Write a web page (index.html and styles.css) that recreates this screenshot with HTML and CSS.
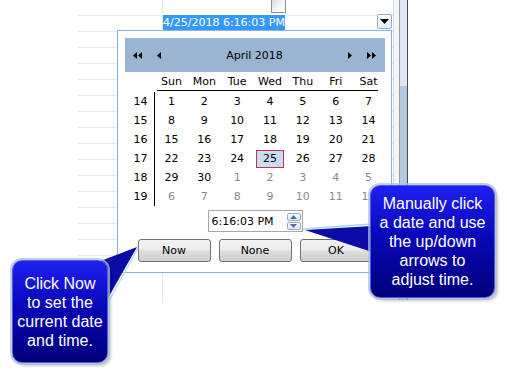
FILE: index.html
```html
<!DOCTYPE html>
<html>
<head>
<meta charset="utf-8">
<link rel="stylesheet" href="styles.css">
</head>
<body>
<div class="app">
  <div class="sheet">
    <div class="row"><div class="c1"></div><div class="c2 center"><span class="checkbox"></span></div></div>
    <div class="row"><div class="c1"></div><div class="c2 editing"><span class="seltext">4/25/2018 6:16:03 PM</span><span class="drop"><svg width="9" height="5" viewBox="0 0 9 5"><path d="M0 0H9L4.5 5Z" fill="#000"/></svg></span></div></div>
    <div class="row"><div class="c1"></div><div class="c2"></div></div>
    <div class="row"><div class="c1"></div><div class="c2"></div></div>
    <div class="row"><div class="c1"></div><div class="c2"></div></div>
    <div class="row"><div class="c1"></div><div class="c2"></div></div>
    <div class="row"><div class="c1"></div><div class="c2"></div></div>
    <div class="row"><div class="c1"></div><div class="c2"></div></div>
    <div class="row"><div class="c1"></div><div class="c2"></div></div>
    <div class="row"><div class="c1"></div><div class="c2"></div></div>
    <div class="row"><div class="c1"></div><div class="c2"></div></div>
    <div class="row"><div class="c1"></div><div class="c2"></div></div>
    <div class="row"><div class="c1"></div><div class="c2"></div></div>
    <div class="row"><div class="c1"></div><div class="c2"></div></div>
    <div class="row"><div class="c1"></div><div class="c2"></div></div>
    <div class="row"><div class="c1"></div><div class="c2"></div></div>
    <div class="row"><div class="c1"></div><div class="c2"></div></div>
    <div class="row tail-row"><div class="c1"></div><div class="c2"></div></div>
  </div>
  <div class="scrollbar">
    <div class="sb-gap"></div>
    <div class="sb-track"><div class="sb-thumb"></div></div>
  </div>
</div>

<div class="popup">
  <div class="cal-head">
    <svg class="nav" width="28" height="7" viewBox="0 0 28 7"><path d="M4 0V7L0 3.5Z M9 0V7L5 3.5Z M28 0V7L24 3.5Z" fill="#000"/></svg>
    <span class="title">April 2018</span>
    <svg class="nav" width="29" height="7" viewBox="0 0 29 7"><path d="M0 0V7L4 3.5Z M19 0V7L23 3.5Z M24 0V7L28 3.5Z" fill="#000"/></svg>
  </div>
  <div class="names">
    <span></span><span>Sun</span><span>Mon</span><span>Tue</span><span>Wed</span><span>Thu</span><span>Fri</span><span>Sat</span>
  </div>
  <div class="rule"></div>
  <div class="days">
    <span class="wk">14</span><span>1</span><span>2</span><span>3</span><span>4</span><span>5</span><span>6</span><span>7</span>
    <span class="wk">15</span><span>8</span><span>9</span><span>10</span><span>11</span><span>12</span><span>13</span><span>14</span>
    <span class="wk">16</span><span>15</span><span>16</span><span>17</span><span>18</span><span>19</span><span>20</span><span>21</span>
    <span class="wk">17</span><span>22</span><span>23</span><span>24</span><span><b class="today">25</b></span><span>26</span><span>27</span><span>28</span>
    <span class="wk">18</span><span>29</span><span>30</span><span class="other">1</span><span class="other">2</span><span class="other">3</span><span class="other">4</span><span class="other">5</span>
    <span class="wk">19</span><span class="other">6</span><span class="other">7</span><span class="other">8</span><span class="other">9</span><span class="other">10</span><span class="other">11</span><span class="other">12</span>
  </div>
  <div class="time-row">
    <div class="time">
      <span class="time-text">6:16:03 PM</span>
      <div class="spin">
        <span class="spin-btn"><svg width="7" height="4" viewBox="0 0 7 4"><path d="M0 4L3.5 0L7 4Z" fill="#4d6fa8"/></svg></span>
        <span class="spin-btn"><svg width="7" height="4" viewBox="0 0 7 4"><path d="M0 0L3.5 4L7 0Z" fill="#4d6fa8"/></svg></span>
      </div>
    </div>
  </div>
  <div class="buttons">
    <button class="btn">Now</button>
    <button class="btn">None</button>
    <button class="btn">OK</button>
  </div>
</div>

<svg class="tails" width="507" height="378" viewBox="0 0 507 378">
  <polygon points="98,262 137,247 108,298" fill="#0b0ba6"/>
  <line x1="110" y1="299" x2="138" y2="248" stroke="#b9dcef" stroke-width="1.5"/>
  <polygon points="305,230 372,226 372,252" fill="#0b0ba6"/>
  <line x1="303" y1="229" x2="372" y2="224" stroke="#a9d3ee" stroke-width="1.5"/>
</svg>

<div class="callout callout-left">Click Now<br>to set the<br>current date<br>and time.</div>
<div class="callout callout-right">Manually click<br>a date and use<br>the up/down<br>arrows to<br>adjust time.</div>
</body>
</html>
```
FILE: styles.css
```css
* { box-sizing: border-box; }
html, body { margin: 0; padding: 0; }
body {
  width: 507px;
  height: 378px;
  position: relative;
  overflow: hidden;
  background: #fff;
  font-family: "DejaVu Sans", sans-serif;
  font-size: 11px;
  color: #000;
}

/* background sheet */
.app { display: flex; align-items: flex-start; }
.sheet { margin-left: 77px; width: 316px; }
.row { display: flex; height: 16px; border-bottom: 1px solid #e9e9e9; }
.tail-row { height: 30px; border-bottom: 0; }
.c1 { width: 86px; border-right: 1px solid #e9e9e9; }
.c2 { flex: 1; display: flex; }
.center { justify-content: center; }
.checkbox {
  width: 15px; height: 14px; margin-top: -1px;
  border: 1px solid #8f8f8f;
  background: linear-gradient(135deg, #dcdcdc, #f7f7f7 60%, #ffffff);
}
.editing { align-items: flex-start; }
.seltext {
  margin-top: -1px;
  height: 15px; line-height: 15px;
  background: #3399ff; color: #fff;
  white-space: nowrap;
}
.drop {
  margin-left: auto; margin-right: 1px; margin-top: -2px;
  width: 15px; height: 15px;
  border: 1px solid #86aede; border-radius: 2px;
  background: linear-gradient(#ffffff, #e6eef8);
  display: flex; align-items: center; justify-content: center;
}

.scrollbar { display: flex; height: 300px; border-left: 1px solid #dadada; border-right: 1px solid #4a4a4a; }
.sb-gap { width: 6px; background: #f3f6fa; border-right: 1px solid #9c9c9c; }
.sb-track { width: 7px; background: #dce7f3; padding-top: 86px; }
.sb-thumb { height: 100%; background: #b3c9e2; }

/* popup calendar */
.popup {
  position: absolute; left: 117px; top: 30px;
  width: 275px; height: 243px;
  border: 1px solid #8db3dd;
  background: #fff;
  padding: 7px 6px 0 7px;
}
.cal-head {
  height: 34px; background: #9bb4d1;
  display: flex; align-items: center;
  padding: 0 8px;
}
.nav { display: block; }
.title { flex: 1; text-align: center; font-size: 11px; }
.names, .days {
  display: grid;
  grid-template-columns: 30px repeat(7, 1fr);
}
.names span { height: 18px; display: flex; align-items: center; justify-content: center; }
.rule { height: 1px; background: #000; margin: 0 7px 0 32px; }
.days { margin-top: 1px; grid-auto-rows: 19px; }
.days span { display: flex; align-items: center; justify-content: center; }
.days .wk { border-right: 1px solid #000; padding-left: 2px; }
.days .other { color: #8a8a8a; }
.today {
  font-weight: normal;
  width: 28px; height: 18px;
  border: 1px solid #c3343e;
  background: #c7ddf5;
  display: flex; align-items: center; justify-content: center;
}
.time-row { display: flex; justify-content: center; margin-top: 4px; }
.time {
  width: 95px; height: 22px;
  border: 1px solid #a8a8a8;
  display: flex; align-items: center;
  padding-left: 3px;
}
.time-text { flex: 1; }
.spin { display: flex; flex-direction: column; gap: 1px; margin-right: 1px; }
.spin-btn {
  width: 14px; height: 8px;
  border: 1px solid #9aaabd; border-radius: 2px;
  background: linear-gradient(#fbfcfe, #dde6f1);
  display: flex; align-items: center; justify-content: center;
}
.buttons { display: flex; justify-content: center; gap: 8px; margin-top: 7px; }
.btn {
  width: 73px; height: 23px;
  border: 1px solid #707070; border-radius: 3px;
  background: linear-gradient(#f4f4f4, #ebebeb 48%, #dddddd 52%, #cfcfcf);
  font-family: "DejaVu Sans", sans-serif; font-size: 11px; color: #000;
  padding: 0;
}

/* callouts */
.tails { position: absolute; left: 0; top: 0; }
.callout {
  position: absolute;
  display: flex; align-items: center; justify-content: center;
  text-align: center;
  color: #fff;
  font-family: "Liberation Sans", Arial, sans-serif;
  font-size: 16px; line-height: 19px;
  border-radius: 10px;
  border: 1px solid #4b5ee0;
  background: linear-gradient(#1f1ff2, #0808b8 45%, #00007a);
  box-shadow: 0 0 0 2px rgba(175, 190, 220, 0.75), 3px 3px 3px rgba(0, 0, 0, 0.22);
}
.callout-left { left: 12px; top: 260px; width: 96px; height: 103px; }
.callout-right { left: 370px; top: 185px; width: 125px; height: 113px; }
```
